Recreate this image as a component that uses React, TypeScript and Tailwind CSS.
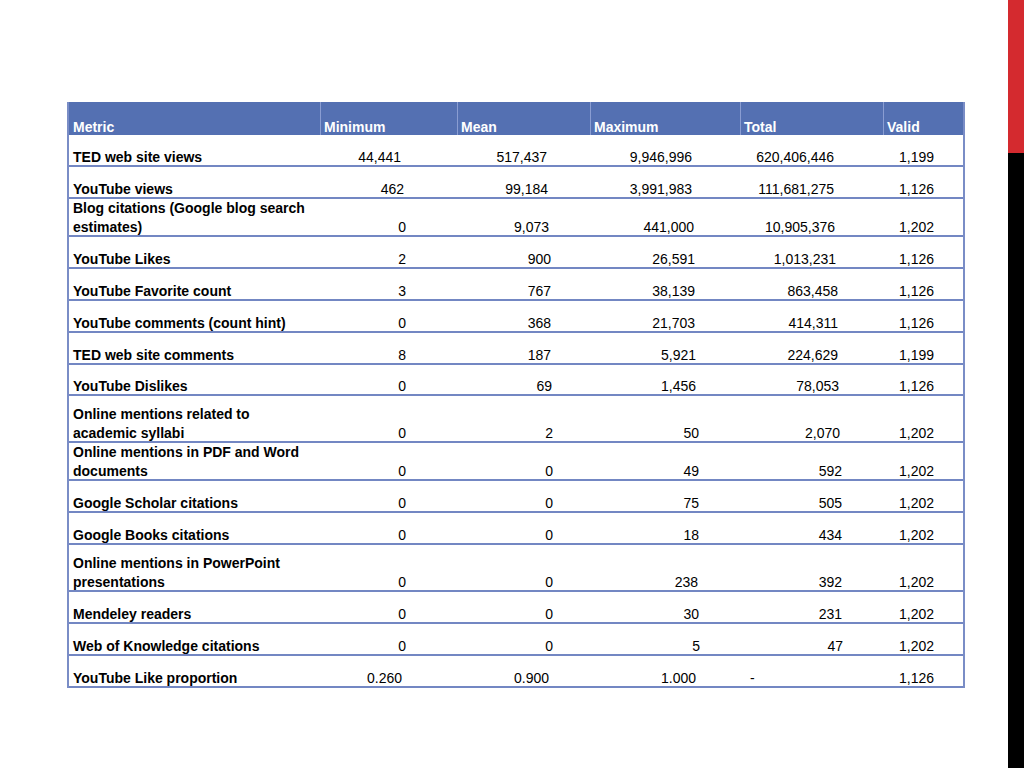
import React from "react";

type Row = { label: string[]; v: string[]; h: string };

const rows: Row[] = [
  { label: ["TED web site views"], v: ["44,441", "517,437", "9,946,996", "620,406,446", "1,199"], h: "h-[32px]" },
  { label: ["YouTube views"], v: ["462", "99,184", "3,991,983", "111,681,275", "1,126"], h: "h-[32px]" },
  { label: ["Blog citations (Google blog search", "estimates)"], v: ["0", "9,073", "441,000", "10,905,376", "1,202"], h: "h-[38px]" },
  { label: ["YouTube Likes"], v: ["2", "900", "26,591", "1,013,231", "1,126"], h: "h-[32px]" },
  { label: ["YouTube Favorite count"], v: ["3", "767", "38,139", "863,458", "1,126"], h: "h-[32px]" },
  { label: ["YouTube comments (count hint)"], v: ["0", "368", "21,703", "414,311", "1,126"], h: "h-[32px]" },
  { label: ["TED web site comments"], v: ["8", "187", "5,921", "224,629", "1,199"], h: "h-[32px]" },
  { label: ["YouTube Dislikes"], v: ["0", "69", "1,456", "78,053", "1,126"], h: "h-[31px]" },
  { label: ["Online mentions related to", "academic syllabi"], v: ["0", "2", "50", "2,070", "1,202"], h: "h-[47px]" },
  { label: ["Online mentions in PDF and Word", "documents"], v: ["0", "0", "49", "592", "1,202"], h: "h-[38px]" },
  { label: ["Google Scholar citations"], v: ["0", "0", "75", "505", "1,202"], h: "h-[32px]" },
  { label: ["Google Books citations"], v: ["0", "0", "18", "434", "1,202"], h: "h-[32px]" },
  { label: ["Online mentions in PowerPoint", "presentations"], v: ["0", "0", "238", "392", "1,202"], h: "h-[47px]" },
  { label: ["Mendeley readers"], v: ["0", "0", "30", "231", "1,202"], h: "h-[32px]" },
  { label: ["Web of Knowledge citations"], v: ["0", "0", "5", "47", "1,202"], h: "h-[32px]" },
  { label: ["YouTube Like proportion"], v: ["0.260", "0.900", "1.000", "-", "1,126"], h: "h-[32px]" },
];

const headers = ["Metric", "Minimum", "Mean", "Maximum", "Total", "Valid"];

const colPad = ["pr-[50px]", "pr-[36px]", "pr-[39px]", "pr-[38px]", "pr-[24px]"];

const lenShift: Record<number, string> = {
  1: "mr-[1px]",
  2: "mr-[2px]",
  3: "mr-[3px]",
  4: "mr-[4px]",
  5: "mr-[5px]",
  6: "mr-[6px]",
  7: "mr-[7px]",
  8: "mr-[8px]",
  9: "mr-[9px]",
  10: "mr-[10px]",
  11: "mr-[11px]",
};

const grid = "grid grid-cols-[251px_137px_133px_150px_143px_80px]";

export default function App() {
  return (
    <div className="w-[1024px] h-[768px] bg-white flex font-['Liberation_Sans',Arial,Helvetica,sans-serif] text-[14px] text-black">
      <div className="flex-1 pl-[67px] pt-[102px]">
        <div className="w-[898px] border-x-2 border-[#7a8dc6]">
          <div className={`${grid} h-[33px] bg-[#5470b2] text-white font-bold leading-[19px]`}>
            {headers.map((h, i) => (
              <div
                key={h}
                className={
                  i === 0
                    ? "flex items-end pl-[4px]"
                    : "flex items-end pl-[3px] border-l border-[#8a9dd2]"
                }
              >
                <span className="mb-[-2px]">{h}</span>
              </div>
            ))}
          </div>
          {rows.map((r, ri) => (
            <div key={ri} className={`${grid} ${r.h} border-b-2 border-[#7387c3] leading-[19px]`}>
              <div className="flex flex-col justify-end pl-[4px] font-bold mb-[-2px]">
                {r.label.map((l) => (
                  <div key={l} className="whitespace-nowrap">
                    {l}
                  </div>
                ))}
              </div>
              {r.v.map((v, ci) =>
                v === "-" ? (
                  <div key={ci} className="flex items-end pl-[10px] mb-[-2px]">
                    -
                  </div>
                ) : (
                  <div key={ci} className={`flex items-end justify-end mb-[-2px] ${colPad[ci]}`}>
                    <span className={lenShift[v.length]}>{v}</span>
                  </div>
                )
              )}
            </div>
          ))}
        </div>
      </div>
      <div className="w-[16px] flex flex-col">
        <div className="h-[153px] bg-[#d42a2f]" />
        <div className="flex-1 bg-black" />
      </div>
    </div>
  );
}
